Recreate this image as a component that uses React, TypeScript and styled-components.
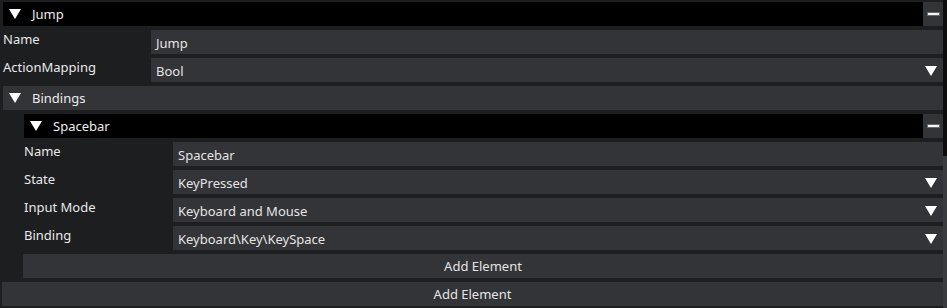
import React from "react";
import styled, { createGlobalStyle } from "styled-components";

const Global = createGlobalStyle`
  html, body { margin: 0; padding: 0; background: #1d1e20; }
  body { font-family: "Noto Sans", "Open Sans", sans-serif; font-size: 13px; color: #e8e8e8; }
`;

const Page = styled.div`
  display: flex;
  width: 947px;
  height: 308px;
  overflow: hidden;
  background: #1d1e20;
`;

const Content = styled.div`
  flex: 1;
  display: flex;
  flex-direction: column;
  gap: 4px;
  padding: 2px 0 0 2px;
  min-width: 0;
`;

const Scrollbar = styled.div`
  width: 4px;
  background: #0d0d0e;
  display: flex;
  flex-direction: column;
  padding-top: 156px;
`;

const Thumb = styled.div`
  height: 152px;
  background: #3a3b3e;
`;

const Header = styled.div<{ $tone: "black" | "gray" }>`
  display: flex;
  align-items: center;
  height: 24px;
  margin-left: 1px;
  background: ${(p) => (p.$tone === "black" ? "#000" : "#333437")};
  color: #ececec;
`;

const HeaderToggle = styled.div`
  display: flex;
  align-items: center;
  gap: 11px;
  padding-left: 6px;
  flex: 1;
  line-height: 18px;
`;

const Collapse = styled.div`
  width: 20px;
  height: 24px;
  background: #333437;
  display: flex;
  align-items: center;
  justify-content: center;
`;

const MinusBar = styled.div`
  width: 11px;
  height: 2px;
  background: #f4f4f4;
  box-shadow: 0 0 0 1px rgba(200, 200, 200, 0.35);
`;

const Row = styled.div<{ $label: number }>`
  display: grid;
  grid-template-columns: ${(p) => p.$label}px 1fr;
  height: 24px;
`;

const Label = styled.div`
  padding-left: 1px;
  line-height: 18px;
  color: #e8e8e8;
  white-space: nowrap;
`;

const Field = styled.div`
  display: flex;
  align-items: center;
  justify-content: space-between;
  background: #333437;
  padding: 0 6px 0 5px;
  color: #e4e4e4;
  line-height: 18px;
  padding-top: 1px;
`;

const Section = styled.div`
  display: flex;
  flex-direction: column;
  gap: 4px;
  padding-left: 21px;
`;

const Button = styled.div`
  height: 24px;
  background: #333437;
  color: #e4e4e4;
  display: flex;
  align-items: center;
  justify-content: center;
  line-height: 18px;
`;

const Tri = ({ size = 12 }: { size?: number }) => (
  <svg width={size} height={10} viewBox="0 0 12 10" style={{ display: "block", flexShrink: 0 }}>
    <polygon points="0,0 12,0 6,10" fill="#ffffff" />
  </svg>
);

const TreeHeader = ({ title, tone, closable }: { title: string; tone: "black" | "gray"; closable?: boolean }) => (
  <Header $tone={tone}>
    <HeaderToggle>
      <Tri />
      <span>{title}</span>
    </HeaderToggle>
    {closable && (
      <Collapse>
        <MinusBar />
      </Collapse>
    )}
  </Header>
);

const Prop = ({ label, value, combo, w }: { label: string; value: string; combo?: boolean; w: number }) => (
  <Row $label={w}>
    <Label>{label}</Label>
    <Field>
      <span>{value}</span>
      {combo && <Tri />}
    </Field>
  </Row>
);

export default function App() {
  return (
    <>
      <Global />
      <Page>
        <Content>
          <TreeHeader title="Jump" tone="black" closable />
          <Prop w={149} label="Name" value="Jump" />
          <Prop w={149} label="ActionMapping" value="Bool" combo />
          <TreeHeader title="Bindings" tone="gray" />
          <Section>
            <TreeHeader title="Spacebar" tone="black" closable />
            <Prop w={150} label="Name" value="Spacebar" />
            <Prop w={150} label="State" value="KeyPressed" combo />
            <Prop w={150} label="Input Mode" value="Keyboard and Mouse" combo />
            <Prop w={150} label="Binding" value="Keyboard\Key\KeySpace" combo />
            <Button>Add Element</Button>
          </Section>
          <Button>Add Element</Button>
        </Content>
        <Scrollbar>
          <Thumb />
        </Scrollbar>
      </Page>
    </>
  );
}
